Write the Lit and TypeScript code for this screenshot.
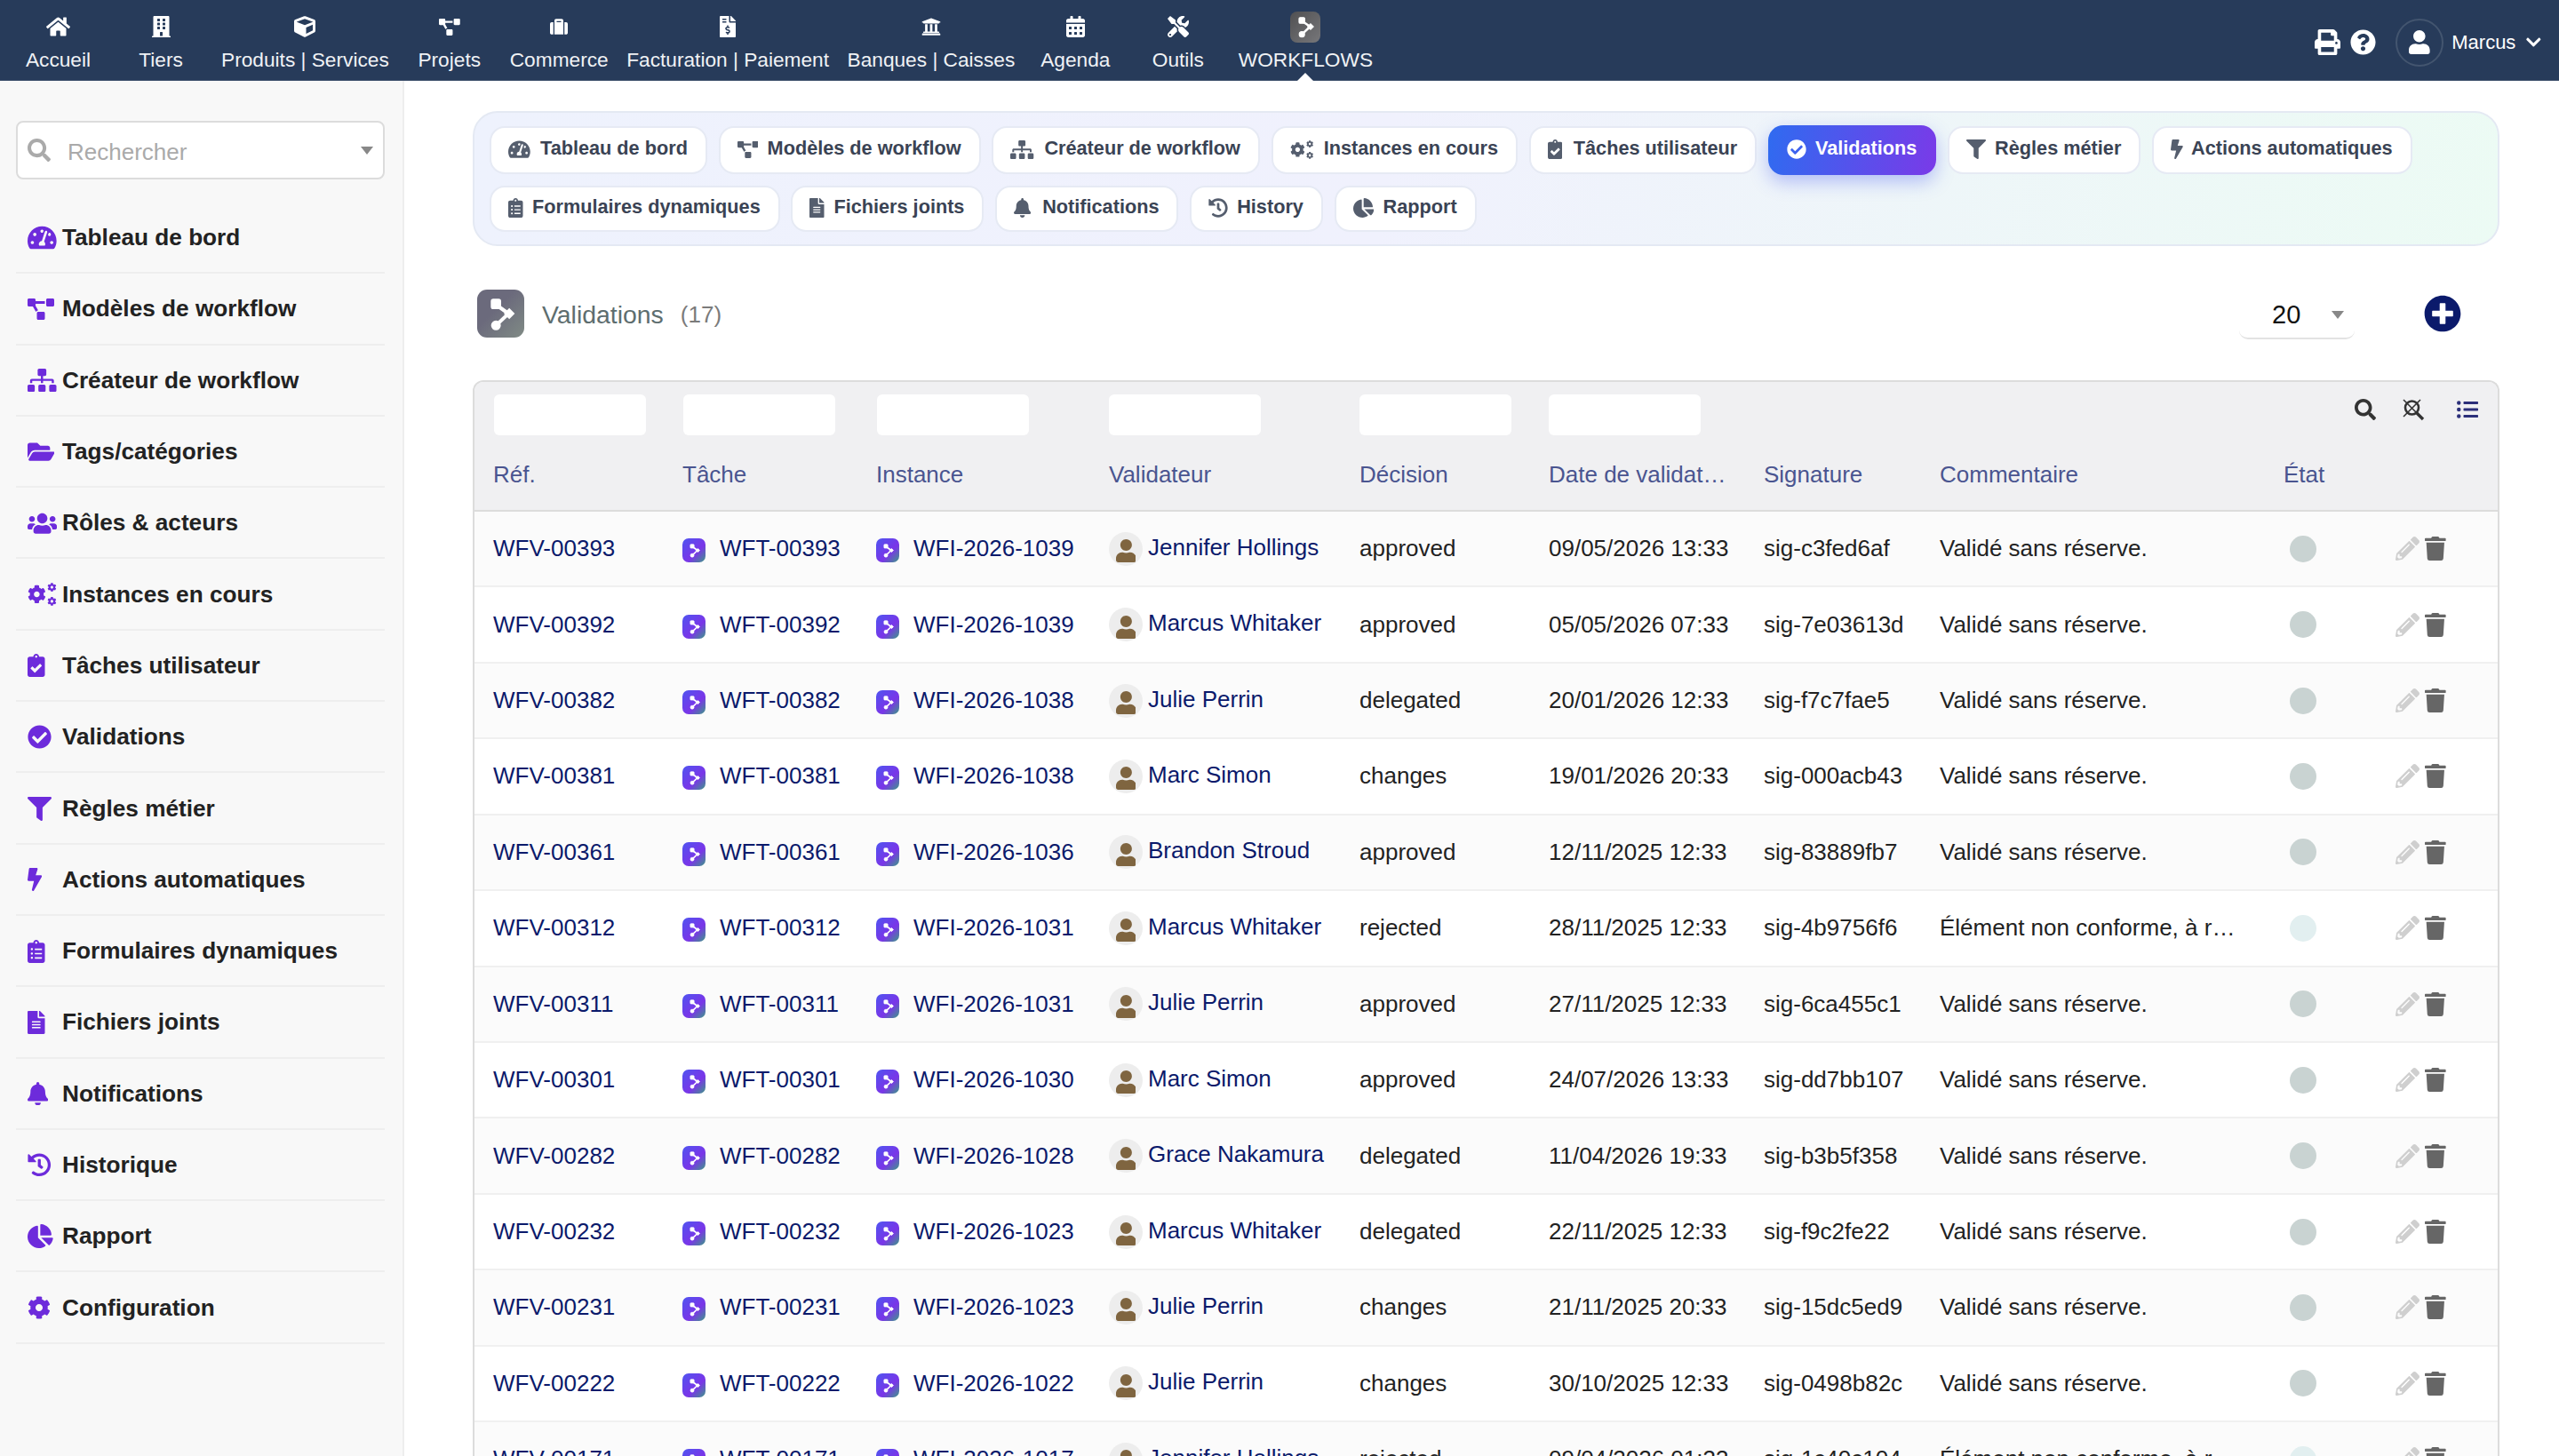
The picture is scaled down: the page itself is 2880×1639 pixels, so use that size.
import { LitElement, css, html, svg } from "lit";
import { customElement } from "lit/decorators.js";

type Icon = { w: number; d: string };

const I: Record<string, Icon> = {
  home: { w: 576, d: "M280.37 148.26L96 300.11V464a16 16 0 0 0 16 16l112.06-.29a16 16 0 0 0 15.92-16V368a16 16 0 0 1 16-16h64a16 16 0 0 1 16 16v95.64a16 16 0 0 0 16 16.05L464 480a16 16 0 0 0 16-16V300L295.67 148.26a12.19 12.19 0 0 0-15.3 0zM571.6 251.47L488 182.56V44.05a12 12 0 0 0-12-12h-56a12 12 0 0 0-12 12v72.61L318.47 43a48 48 0 0 0-61 0L4.34 251.47a12 12 0 0 0-1.6 16.9l25.5 31A12 12 0 0 0 45.15 301l235.22-193.74a12.19 12.19 0 0 1 15.3 0L530.9 301a12 12 0 0 0 16.9-1.6l25.5-31a12 12 0 0 0-1.7-16.93z" },
  search: { w: 512, d: "M505 442.7L405.3 343c-4.5-4.5-10.6-7-17-7H372c27.6-35.3 44-79.7 44-128C416 93.1 322.9 0 208 0S0 93.1 0 208s93.1 208 208 208c48.3 0 92.7-16.4 128-44v16.3c0 6.4 2.5 12.5 7 17l99.7 99.7c9.4 9.4 24.6 9.4 33.9 0l28.3-28.3c9.4-9.4 9.4-24.6.1-34zM208 336c-70.7 0-128-57.2-128-128 0-70.7 57.2-128 128-128 70.7 0 128 57.2 128 128 0 70.7-57.2 128-128 128z" },
  check: { w: 512, d: "M504 256c0 136.967-111.033 248-248 248S8 392.967 8 256 119.033 8 256 8s248 111.033 248 248zM227.314 387.314l184-184c6.248-6.248 6.248-16.379 0-22.627l-22.627-22.627c-6.248-6.249-16.379-6.249-22.628 0L216 308.118l-70.059-70.059c-6.248-6.248-16.379-6.248-22.628 0l-22.627 22.627c-6.248 6.248-6.248 16.379 0 22.627l104 104c6.249 6.249 16.379 6.249 22.628.001z" },
  filter: { w: 512, d: "M487.976 0H24.028C2.71 0-8.047 25.866 7.058 40.971L192 225.941V432c0 7.831 3.821 15.17 10.237 19.662l80 55.98C298.02 518.69 320 507.493 320 487.98V225.941l184.947-184.97C520.021 25.896 509.338 0 487.976 0z" },
  bell: { w: 448, d: "M224 512c35.32 0 63.97-28.65 63.97-64H160.03c0 35.35 28.65 64 63.97 64zm215.39-149.71c-19.32-20.76-55.47-51.99-55.47-154.29 0-77.7-54.48-139.9-127.94-155.16V32c0-17.67-14.32-32-31.98-32s-31.98 14.33-31.98 32v20.84C118.56 68.1 64.08 130.3 64.08 208c0 102.3-36.15 133.53-55.47 154.29-6 6.45-8.66 14.16-8.61 21.71.11 16.4 12.98 32 32.1 32h383.8c19.12 0 32-15.6 32.1-32 .05-7.55-2.61-15.27-8.61-21.71z" },
  bolt: { w: 320, d: "M296 160H180.6l42.6-129.8C227.2 15 215.7 0 200 0H56C44 0 33.8 8.9 32.2 20.8l-32 240C-1.7 275.2 9.5 288 24 288h118.7L96.6 482.5c-3.6 15.2 8 29.5 23.3 29.5 8.4 0 16.4-4.4 20.8-12l176-304c9.3-15.9-2.2-36-20.7-36z" },
  file: { w: 384, d: "M224 136V0H24C10.7 0 0 10.7 0 24v464c0 13.3 10.7 24 24 24h336c13.3 0 24-10.7 24-24V160H248c-13.2 0-24-10.8-24-24zm64 236c0 6.6-5.4 12-12 12H108c-6.6 0-12-5.4-12-12v-8c0-6.6 5.4-12 12-12h168c6.6 0 12 5.4 12 12v8zm0-64c0 6.6-5.4 12-12 12H108c-6.6 0-12-5.4-12-12v-8c0-6.6 5.4-12 12-12h168c6.6 0 12 5.4 12 12v8zm0-72v8c0 6.6-5.4 12-12 12H108c-6.6 0-12-5.4-12-12v-8c0-6.6 5.4-12 12-12h168c6.6 0 12 5.4 12 12zm96-114.1v6.1H256V0h6.1c6.4 0 12.5 2.5 17 7l97.9 98c4.5 4.5 7 10.6 7 16.9z" },
  trash: { w: 448, d: "M432 32H312l-9.4-18.7A24 24 0 0 0 281.1 0H166.8a23.72 23.72 0 0 0-21.4 13.3L136 32H16A16 16 0 0 0 0 48v32a16 16 0 0 0 16 16h416a16 16 0 0 0 16-16V48a16 16 0 0 0-16-16zM53.2 467a48 48 0 0 0 47.9 45h245.8a48 48 0 0 0 47.9-45L416 128H32z" },
  user: { w: 448, d: "M224 256c70.7 0 128-57.3 128-128S294.7 0 224 0 96 57.3 96 128s57.3 128 128 128zm89.6 32h-16.7c-22.2 10.2-46.9 16-72.9 16s-50.6-5.8-72.9-16h-16.7C60.2 288 0 348.2 0 422.4V464c0 26.5 21.5 48 48 48h352c26.5 0 48-21.5 48-48v-41.6c0-74.2-60.2-134.4-134.4-134.4z" },
  plus: { w: 512, d: "M256 8C119 8 8 119 8 256s111 248 248 248 248-111 248-248S393 8 256 8zm144 276c0 6.6-5.4 12-12 12h-92v92c0 6.6-5.4 12-12 12h-56c-6.6 0-12-5.4-12-12v-92h-92c-6.6 0-12-5.4-12-12v-56c0-6.6 5.4-12 12-12h92v-92c0-6.6 5.4-12 12-12h56c6.6 0 12 5.4 12 12v92h92c6.6 0 12 5.4 12 12v56z" },
  help: { w: 512, d: "M504 256c0 136.997-111.043 248-248 248S8 392.997 8 256C8 119.083 119.043 8 256 8s248 111.083 248 248zM262.655 90c-54.497 0-89.255 22.957-116.549 63.758-3.536 5.286-2.353 12.415 2.715 16.258l34.699 26.31c5.205 3.947 12.621 3.008 16.665-2.122 17.864-22.658 30.113-35.797 57.303-35.797 20.429 0 45.698 13.148 45.698 32.958 0 14.976-12.363 22.667-32.534 33.976C247.128 238.528 216 254.941 216 296v4c0 6.627 5.373 12 12 12h56c6.627 0 12-5.373 12-12v-1.333c0-28.462 83.186-29.647 83.186-106.667 0-58.002-60.165-102-116.531-102zM256 338c-25.365 0-46 20.635-46 46 0 25.364 20.635 46 46 46s46-20.636 46-46c0-25.365-20.635-46-46-46z" },
  chevron: { w: 448, d: "M207.029 381.476L12.686 187.132c-9.373-9.373-9.373-24.569 0-33.941l22.667-22.667c9.357-9.357 24.522-9.375 33.901-.04L224 284.505l154.745-154.021c9.379-9.335 24.544-9.317 33.901.04l22.667 22.667c9.373 9.373 9.373 24.569 0 33.941L240.971 381.476c-9.373 9.372-24.569 9.372-33.942 0z" },
  diagram: { w: 640, d: "M384 320H256c-17.67 0-32 14.33-32 32v128c0 17.67 14.33 32 32 32h128c17.67 0 32-14.33 32-32V352c0-17.67-14.33-32-32-32zM192 32c0-17.67-14.33-32-32-32H32C14.33 0 0 14.33 0 32v128c0 17.67 14.33 32 32 32h95.72l73.16 128.04C211.98 300.98 232.4 288 256 288h.28L192 175.51V128h224V64H192V32zM608 0H480c-17.67 0-32 14.33-32 32v128c0 17.67 14.33 32 32 32h128c17.67 0 32-14.33 32-32V32c0-17.67-14.33-32-32-32z" },
  sitemap: { w: 640, d: "M128 352H32c-17.67 0-32 14.33-32 32v96c0 17.67 14.33 32 32 32h96c17.67 0 32-14.33 32-32v-96c0-17.67-14.33-32-32-32zm-24-80h192v48h48v-48h192v48h48v-57.59c0-21.17-17.23-38.41-38.41-38.41H344v-64h40c17.67 0 32-14.33 32-32V32c0-17.67-14.33-32-32-32H256c-17.67 0-32 14.33-32 32v96c0 17.67 14.33 32 32 32h40v64H94.41C73.23 224 56 241.23 56 262.41V320h48v-48zm264 80h-96c-17.67 0-32 14.33-32 32v96c0 17.67 14.33 32 32 32h96c17.67 0 32-14.33 32-32v-96c0-17.67-14.33-32-32-32zm240 0h-96c-17.67 0-32 14.33-32 32v96c0 17.67 14.33 32 32 32h96c17.67 0 32-14.33 32-32v-96c0-17.67-14.33-32-32-32z" },
  folder: { w: 576, d: "M572.694 292.093L500.27 416.248A63.997 63.997 0 0 1 444.989 448H45.025c-18.523 0-30.064-20.093-20.731-36.093l72.424-124.155A64 64 0 0 1 152 256h399.964c18.523 0 30.064 20.093 20.73 36.093zM152 224h328v-48c0-26.51-21.49-48-48-48H272l-64-64H48C21.49 64 0 85.49 0 112v278.046l69.077-118.418C86.214 242.25 117.989 224 152 224z" },
  users: { w: 640, d: "M96 224c35.3 0 64-28.7 64-64s-28.7-64-64-64-64 28.7-64 64 28.7 64 64 64zm448 0c35.3 0 64-28.7 64-64s-28.7-64-64-64-64 28.7-64 64 28.7 64 64 64zm32 32h-64c-17.6 0-33.5 7.1-45.1 18.6 40.3 22.1 68.9 62 75.1 109.4h66c17.7 0 32-14.3 32-32v-32c0-35.3-28.7-64-64-64zm-256 0c61.9 0 112-50.1 112-112S381.9 32 320 32 208 82.1 208 144s50.1 112 112 112zm76.8 32h-8.3c-20.8 10-43.9 16-68.5 16s-47.6-6-68.5-16h-8.3C179.6 288 128 339.6 128 403.2V432c0 26.5 21.5 48 48 48h288c26.5 0 48-21.5 48-48v-28.8c0-63.6-51.6-115.2-115.2-115.2zm-223.7-13.4C161.5 263.1 145.6 256 128 256H64c-35.3 0-64 28.7-64 64v32c0 17.7 14.3 32 32 32h65.9c6.3-47.4 34.9-87.3 75.2-109.4z" },
  cog: { w: 512, d: "M487.4 315.7l-42.6-24.6c4.3-23.2 4.3-47 0-70.2l42.6-24.6c4.9-2.8 7.1-8.6 5.5-14-11.1-35.6-30-67.8-54.7-94.6-3.8-4.1-10-5.1-14.8-2.3L380.8 110c-17.9-15.4-38.5-27.3-60.8-35.1V25.8c0-5.6-3.9-10.5-9.4-11.7-36.7-8.2-74.3-7.8-109.2 0-5.5 1.2-9.4 6.1-9.4 11.7V75c-22.2 7.9-42.8 19.8-60.8 35.1L88.7 85.5c-4.9-2.8-11-1.9-14.8 2.3-24.7 26.7-43.6 58.9-54.7 94.6-1.7 5.4.6 11.2 5.5 14L67.3 221c-4.3 23.2-4.3 47 0 70.2l-42.6 24.6c-4.9 2.8-7.1 8.6-5.5 14 11.1 35.6 30 67.8 54.7 94.6 3.8 4.1 10 5.1 14.8 2.3l42.6-24.6c17.9 15.4 38.5 27.3 60.8 35.1v49.2c0 5.6 3.9 10.5 9.4 11.7 36.7 8.2 74.3 7.8 109.2 0 5.5-1.2 9.4-6.1 9.4-11.7v-49.2c22.2-7.9 42.8-19.8 60.8-35.1l42.6 24.6c4.9 2.8 11 1.9 14.8-2.3 24.7-26.7 43.6-58.9 54.7-94.6 1.5-5.5-.7-11.3-5.6-14.1zM256 336c-44.1 0-80-35.9-80-80s35.9-80 80-80 80 35.9 80 80-35.9 80-80 80z" },
  history: { w: 512, d: "M504 255.531c.253 136.64-111.18 248.372-247.82 248.468-59.015.042-113.223-20.53-155.822-54.911-11.077-8.94-11.905-25.541-1.839-35.607l11.267-11.267c8.609-8.609 22.353-9.551 31.891-1.984C173.062 425.135 212.781 440 256 440c101.705 0 184-82.311 184-184 0-101.705-82.311-184-184-184-48.814 0-93.149 18.969-126.068 49.932l50.754 50.754c10.08 10.08 2.941 27.314-11.313 27.314H24c-8.837 0-16-7.163-16-16V38.627c0-14.254 17.234-21.393 27.314-11.314l49.372 49.372C129.209 34.136 189.552 8 256 8c136.81 0 247.747 110.78 248 247.531zm-180.912 78.784l9.823-12.63c8.138-10.463 6.253-25.542-4.21-33.679L288 256.349V152c0-13.255-10.745-24-24-24h-16c-13.255 0-24 10.745-24 24v135.651l65.409 50.874c10.463 8.137 25.541 6.253 33.679-4.21z" },
  pie: { w: 544, d: "M527.79 288H290.5l158.03 158.03c6.04 6.04 15.98 6.53 22.19.68 38.7-36.46 65.32-85.61 73.13-140.86 1.34-9.46-6.51-17.85-16.06-17.85zm-15.83-64.8C503.72 103.74 408.26 8.28 288.8.04 279.68-.59 272 7.1 272 16.24V240h223.77c9.14 0 16.82-7.68 16.19-16.8zM224 288V50.71c0-9.55-8.39-17.4-17.84-16.06C86.99 51.49-4.1 155.6.14 280.37 4.5 408.51 114.83 513.59 243.03 511.98c50.4-.63 96.97-16.87 135.26-44.03 7.9-5.6 8.42-17.23 1.57-24.08L224 288z" },
  clipCheck: { w: 384, d: "M336 64h-80c0-35.3-28.7-64-64-64s-64 28.7-64 64H48C21.5 64 0 85.5 0 112v352c0 26.5 21.5 48 48 48h288c26.5 0 48-21.5 48-48V112c0-26.5-21.5-48-48-48zM192 40c13.3 0 24 10.7 24 24s-10.7 24-24 24-24-10.7-24-24 10.7-24 24-24zm121.2 231.8l-143 141.8c-4.7 4.7-12.3 4.6-17-.1l-82.6-83.3c-4.7-4.7-4.6-12.3.1-17L99.1 285c4.7-4.7 12.3-4.6 17 .1l46 46.4 106-105.2c4.7-4.7 12.3-4.6 17 .1l28.2 28.4c4.7 4.8 4.6 12.3-.1 17z" },
  clipList: { w: 384, d: "M336 64h-80c0-35.3-28.7-64-64-64s-64 28.7-64 64H48C21.5 64 0 85.5 0 112v352c0 26.5 21.5 48 48 48h288c26.5 0 48-21.5 48-48V112c0-26.5-21.5-48-48-48zM96 424c-13.3 0-24-10.7-24-24s10.7-24 24-24 24 10.7 24 24-10.7 24-24 24zm0-96c-13.3 0-24-10.7-24-24s10.7-24 24-24 24 10.7 24 24-10.7 24-24 24zm0-96c-13.3 0-24-10.7-24-24s10.7-24 24-24 24 10.7 24 24-10.7 24-24 24zm96-192c13.3 0 24 10.7 24 24s-10.7 24-24 24-24-10.7-24-24 10.7-24 24-24zm128 368c0 4.4-3.6 8-8 8H168c-4.4 0-8-3.6-8-8v-16c0-4.4 3.6-8 8-8h144c4.4 0 8 3.6 8 8v16zm0-96c0 4.4-3.6 8-8 8H168c-4.4 0-8-3.6-8-8v-16c0-4.4 3.6-8 8-8h144c4.4 0 8 3.6 8 8v16zm0-96c0 4.4-3.6 8-8 8H168c-4.4 0-8-3.6-8-8v-16c0-4.4 3.6-8 8-8h144c4.4 0 8 3.6 8 8v16z" },
  gauge: { w: 576, d: "M288 32C128.94 32 0 160.94 0 320c0 52.8 14.25 102.26 39.06 144.8 5.61 9.62 16.3 15.2 27.44 15.2h443c11.14 0 21.83-5.58 27.44-15.2C561.75 422.26 576 372.8 576 320c0-159.06-128.94-288-288-288zm0 64c14.71 0 26.58 10.13 30.32 23.65-1.11 2.26-2.64 4.23-3.45 6.67l-9.22 27.67c-5.13 3.49-10.97 6.01-17.64 6.01-17.67 0-32-14.33-32-32S270.33 96 288 96zM96 384c-17.67 0-32-14.33-32-32s14.33-32 32-32 32 14.33 32 32-14.33 32-32 32zm48-160c-17.67 0-32-14.33-32-32s14.33-32 32-32 32 14.33 32 32-14.33 32-32 32zm246.77-72.41l-61.33 184C343.13 347.33 352 364.54 352 384c0 11.72-3.38 22.55-8.88 32H232.88c-5.5-9.45-8.88-20.28-8.88-32 0-33.94 26.5-61.43 59.9-63.59l61.34-184.01c4.17-12.56 17.73-19.45 30.36-15.17 12.57 4.19 19.35 17.79 15.17 30.36zm14.66 57.2l15.52-46.55c3.47-1.29 7.13-2.23 11.05-2.23 17.67 0 32 14.33 32 32s-14.33 32-32 32c-11.38 0-20.89-6.28-26.57-15.22zM480 384c-17.67 0-32-14.33-32-32s14.33-32 32-32 32 14.33 32 32-14.33 32-32 32z" },
  building: { w: 448, d: "M436 480h-20V24c0-13.255-10.745-24-24-24H56C42.745 0 32 10.745 32 24v456H12c-6.627 0-12 5.373-12 12v20h448v-20c0-6.627-5.373-12-12-12zM128 76c0-6.627 5.373-12 12-12h40c6.627 0 12 5.373 12 12v40c0 6.627-5.373 12-12 12h-40c-6.627 0-12-5.373-12-12V76zm0 96c0-6.627 5.373-12 12-12h40c6.627 0 12 5.373 12 12v40c0 6.627-5.373 12-12 12h-40c-6.627 0-12-5.373-12-12v-40zm52 148h-40c-6.627 0-12-5.373-12-12v-40c0-6.627 5.373-12 12-12h40c6.627 0 12 5.373 12 12v40c0 6.627-5.373 12-12 12zm76 160h-64v-84c0-6.627 5.373-12 12-12h40c6.627 0 12 5.373 12 12v84zm64-172c0 6.627-5.373 12-12 12h-40c-6.627 0-12-5.373-12-12v-40c0-6.627 5.373-12 12-12h40c6.627 0 12 5.373 12 12v40zm0-96c0 6.627-5.373 12-12 12h-40c-6.627 0-12-5.373-12-12v-40c0-6.627 5.373-12 12-12h40c6.627 0 12 5.373 12 12v40zm0-96c0 6.627-5.373 12-12 12h-40c-6.627 0-12-5.373-12-12V76c0-6.627 5.373-12 12-12h40c6.627 0 12 5.373 12 12v40z" },
  suitcase: { w: 512, d: "M128 480h256V80c0-26.5-21.5-48-48-48H176c-26.5 0-48 21.5-48 48v400zm64-384h128v32H192V96zm320 80v256c0 26.5-21.5 48-48 48h-48V128h48c26.5 0 48 21.5 48 48zM96 480H48c-26.5 0-48-21.5-48-48V176c0-26.5 21.5-48 48-48h48v352z" },
  bank: { w: 512, d: "M496 128v16a8 8 0 0 1-8 8h-24v12c0 6.627-5.373 12-12 12H60c-6.627 0-12-5.373-12-12v-12H24a8 8 0 0 1-8-8v-16a8 8 0 0 1 4.941-7.392l232-88a7.996 7.996 0 0 1 6.118 0l232 88A8 8 0 0 1 496 128zm-24 304H40c-13.255 0-24 10.745-24 24v16a8 8 0 0 0 8 8h464a8 8 0 0 0 8-8v-16c0-13.255-10.745-24-24-24zM96 192v192H60c-6.627 0-12 5.373-12 12v20h416v-20c0-6.627-5.373-12-12-12h-36V192h-64v192h-64V192h-64v192h-64V192H96z" },
  calendar: { w: 448, d: "M0 464c0 26.5 21.5 48 48 48h352c26.5 0 48-21.5 48-48V192H0v272zm320-196c0-6.6 5.4-12 12-12h40c6.6 0 12 5.4 12 12v40c0 6.6-5.4 12-12 12h-40c-6.6 0-12-5.4-12-12v-40zm0 128c0-6.6 5.4-12 12-12h40c6.6 0 12 5.4 12 12v40c0 6.6-5.4 12-12 12h-40c-6.6 0-12-5.4-12-12v-40zM192 268c0-6.6 5.4-12 12-12h40c6.6 0 12 5.4 12 12v40c0 6.6-5.4 12-12 12h-40c-6.6 0-12-5.4-12-12v-40zm0 128c0-6.6 5.4-12 12-12h40c6.6 0 12 5.4 12 12v40c0 6.6-5.4 12-12 12h-40c-6.6 0-12-5.4-12-12v-40zM64 268c0-6.6 5.4-12 12-12h40c6.6 0 12 5.4 12 12v40c0 6.6-5.4 12-12 12H76c-6.6 0-12-5.4-12-12v-40zm0 128c0-6.6 5.4-12 12-12h40c6.6 0 12 5.4 12 12v40c0 6.6-5.4 12-12 12H76c-6.6 0-12-5.4-12-12v-40zM400 64h-48V16c0-8.8-7.2-16-16-16h-32c-8.8 0-16 7.2-16 16v48H160V16c0-8.8-7.2-16-16-16h-32c-8.8 0-16 7.2-16 16v48H48C21.5 64 0 85.5 0 112v48h448v-48c0-26.5-21.5-48-48-48z" },
  print: { w: 512, d: "M448 192V77.25c0-8.49-3.37-16.62-9.37-22.63L393.37 9.37c-6-6-14.14-9.37-22.63-9.37H96C78.33 0 64 14.33 64 32v160c-35.35 0-64 28.65-64 64v112c0 8.84 7.16 16 16 16h48v96c0 17.67 14.33 32 32 32h320c17.67 0 32-14.33 32-32v-96h48c8.84 0 16-7.16 16-16V256c0-35.35-28.65-64-64-64zm-64 256H128v-96h256v96zm0-224H128V64h192v48c0 8.84 7.16 16 16 16h48v96zm48 72c-13.25 0-24-10.75-24-24 0-13.26 10.75-24 24-24s24 10.74 24 24c0 13.25-10.75 24-24 24z" },
  tools: { w: 512, d: "M501.1 395.7L384 278.6c-23.1-23.1-57.6-27.6-85.4-13.9L192 158.1V96L64 0 0 64l96 128h62.1l106.6 106.6c-13.6 27.8-9.2 62.3 13.9 85.4l117.1 117.1c14.6 14.6 38.2 14.6 52.7 0l52.7-52.7c14.5-14.6 14.5-38.2 0-52.7zM331.7 225c28.3 0 54.9 11 74.9 31l19.4 19.4c15.8-6.9 30.8-16.5 43.8-29.5 37.1-37.1 49.7-89.3 37.9-136.7-2.2-9-13.5-12.1-20.1-5.5l-74.4 74.4-67.9-11.3L334 98.9l74.4-74.4c6.6-6.6 3.4-17.9-5.7-20.2-47.4-11.7-99.6.9-136.6 37.9-28.5 28.5-41.9 66.1-41.2 103.6l82.1 82.1c8.1-1.9 16.5-2.9 24.7-2.9zm-103.9 82l-56.7-56.7L18.7 402.8c-25 25-25 65.5 0 90.5s65.5 25 90.5 0l123.6-123.6c-7.6-19.9-9.9-41.6-5-62.7zM64 472c-13.2 0-24-10.8-24-24 0-13.3 10.7-24 24-24s24 10.7 24 24c0 13.2-10.7 24-24 24z" },
  list: { w: 512, d: "M48 48a48 48 0 1 0 48 48 48 48 0 0 0-48-48zm0 160a48 48 0 1 0 48 48 48 48 0 0 0-48-48zm0 160a48 48 0 1 0 48 48 48 48 0 0 0-48-48zm448 16H176a16 16 0 0 0-16 16v32a16 16 0 0 0 16 16h320a16 16 0 0 0 16-16v-32a16 16 0 0 0-16-16zm0-320H176a16 16 0 0 0-16 16v32a16 16 0 0 0 16 16h320a16 16 0 0 0 16-16V80a16 16 0 0 0-16-16zm0 160H176a16 16 0 0 0-16 16v32a16 16 0 0 0 16 16h320a16 16 0 0 0 16-16v-32a16 16 0 0 0-16-16z" },
  pencil: { w: 512, d: "M497.9 142.1l-46.1 46.1c-4.7 4.7-12.3 4.7-17 0l-111-111c-4.7-4.7-4.7-12.3 0-17l46.1-46.1c18.7-18.7 49.1-18.7 67.9 0l60.1 60.1c18.8 18.7 18.8 49.1 0 67.9zM284.2 99.8L21.6 362.4.4 483.9c-2.9 16.4 11.4 30.6 27.8 27.8l121.5-21.3 262.6-262.6c4.7-4.7 4.7-12.3 0-17l-111-111c-4.8-4.7-12.4-4.7-17.1 0zM124.1 339.9c-5.5-5.5-5.5-14.3 0-19.8l154-154c5.5-5.5 14.3-5.5 19.8 0s5.5 14.3 0 19.8l-154 154c-5.5 5.5-14.3 5.5-19.8 0zM88 424h48v36.3l-64.5 11.3-31.1-31.1L51.7 376H88v48z" },
  invoice: { w: 384, d: "M377 105L279.1 7c-4.5-4.5-10.6-7-17-7H256v128h128v-6.1c0-6.3-2.5-12.4-7-16.9zm-153 31V0H24C10.7 0 0 10.7 0 24v464c0 13.3 10.7 24 24 24h336c13.3 0 24-10.7 24-24V160H248c-13.2 0-24-10.8-24-24zM64 72c0-4.42 3.58-8 8-8h80c4.42 0 8 3.58 8 8v16c0 4.42-3.58 8-8 8H72c-4.42 0-8-3.58-8-8V72zm0 80v-16c0-4.42 3.58-8 8-8h80c4.42 0 8 3.58 8 8v16c0 4.42-3.58 8-8 8H72c-4.42 0-8-3.58-8-8zm144 263.88V440c0 4.42-3.58 8-8 8h-16c-4.42 0-8-3.58-8-8v-24.29c-11.29-.58-22.27-4.52-31.37-11.35-3.9-2.93-4.1-8.77-.57-12.14l11.75-11.21c2.77-2.64 6.89-2.76 10.13-.73 3.87 2.42 8.26 3.72 12.82 3.72h28.11c6.5 0 11.8-5.92 11.8-13.19 0-5.95-3.61-11.19-8.77-12.73l-45-13.5c-18.59-5.58-31.58-23.42-31.58-43.39 0-24.52 19.05-44.44 42.67-45.07V232c0-4.42 3.58-8 8-8h16c4.42 0 8 3.58 8 8v24.29c11.29.58 22.27 4.51 31.37 11.35 3.9 2.93 4.1 8.77.57 12.14l-11.75 11.21c-2.77 2.64-6.89 2.76-10.13.73-3.87-2.43-8.26-3.72-12.82-3.72h-28.11c-6.5 0-11.8 5.92-11.8 13.19 0 5.95 3.61 11.19 8.77 12.73l45 13.5c18.59 5.58 31.58 23.42 31.58 43.39 0 24.53-19.05 44.44-42.67 45.07z" },
  cube: { w: 512, d: "M239.1 6.3l-208 78c-18.7 7-31.1 25-31.1 45v225.1c0 18.2 10.3 34.8 26.5 42.9l208 104c13.5 6.8 29.4 6.8 42.9 0l208-104c16.3-8.1 26.5-24.8 26.5-42.9V129.3c0-20-12.4-37.9-31.1-44.9l-208-78C262 2.2 250 2.2 239.1 6.3zM256 68.4l192 72v1.1l-192 78-192-78v-1.1l192-72zm32 356V275.5l160-65v133.9l-160 80z" },
};

// renders an icon at a given pixel height
function icon(name: string, h: number) {
  const i = I[name];
  return html`<svg viewBox="0 0 ${i.w} 512" width=${(h * i.w) / 512} height=${h} fill="currentColor"><path d=${i.d}></path></svg>`;
}

function cogs(h: number) {
  const c = I.cog.d;
  return html`<svg viewBox="0 0 640 512" width=${(h * 640) / 512} height=${h} fill="currentColor">
    ${svg`<g transform="translate(0 50) scale(.8)"><path d=${c}></path></g>
    <g transform="translate(440 0) scale(.39)"><path d=${c}></path></g>
    <g transform="translate(440 312) scale(.39)"><path d=${c}></path></g>`}
  </svg>`;
}

// the workflow mark: a square, a diamond and a dot joined by lines
function flow(size: number) {
  return html`<svg viewBox="0 0 24 24" width=${size} height=${size}>
    <g fill="#fff" stroke="#fff">
      <rect x="5.5" y="2.5" width="6" height="6" rx="1.2"></rect>
      <path d="M14.5 12l3-3 3 3-3 3z"></path>
      <circle cx="8.5" cy="20" r="2.8"></circle>
      <path d="M8.5 6L17 12M17 12L8.5 20" fill="none" stroke-width="2.4"></path>
    </g>
  </svg>`;
}

const NAV = [
  ["home", "Accueil", 24], ["building", "Tiers", 24], ["cube", "Produits | Services", 24], ["diagram", "Projets", 19],
  ["suitcase", "Commerce", 20], ["invoice", "Facturation | Paiement", 24], ["bank", "Banques | Caisses", 22],
  ["calendar", "Agenda", 24], ["tools", "Outils", 24],
] as [string, string, number][];

const SIDE = [
  ["gauge", "Tableau de bord", 29], ["diagram", "Modèles de workflow", 24], ["sitemap", "Créateur de workflow", 26],
  ["folder", "Tags/catégories", 27], ["users", "Rôles & acteurs", 26.5], ["cogs", "Instances en cours", 26],
  ["clipCheck", "Tâches utilisateur", 26], ["check", "Validations", 27], ["filter", "Règles métier", 27],
  ["bolt", "Actions automatiques", 26], ["clipList", "Formulaires dynamiques", 26], ["file", "Fichiers joints", 26],
  ["bell", "Notifications", 26.5], ["history", "Historique", 26.5], ["pie", "Rapport", 27], ["cog", "Configuration", 26],
] as [string, string, number][];

// icon, label, icon height, width of the slot in front of the label
const TABS = [
  [["gauge", "Tableau de bord", 22, 36], ["diagram", "Modèles de workflow", 19, 34], ["sitemap", "Créateur de workflow", 21, 38], ["cogs", "Instances en cours", 21, 38],
   ["clipCheck", "Tâches utilisateur", 22, 29], ["check", "Validations", 22, 32], ["filter", "Règles métier", 22, 32], ["bolt", "Actions automatiques", 22, 23]],
  [["clipList", "Formulaires dynamiques", 22, 27], ["file", "Fichiers joints", 22, 27], ["bell", "Notifications", 22, 32], ["history", "History", 22, 32], ["pie", "Rapport", 22, 34]],
] as [string, string, number, number][][];

const OK = "Validé sans réserve.";
const KO = "Élément non conforme, à r…";
const ROWS = [
  ["00393", "1039", "Jennifer Hollings", "approved", "09/05/2026 13:33", "sig-c3fed6af", OK],
  ["00392", "1039", "Marcus Whitaker", "approved", "05/05/2026 07:33", "sig-7e03613d", OK],
  ["00382", "1038", "Julie Perrin", "delegated", "20/01/2026 12:33", "sig-f7c7fae5", OK],
  ["00381", "1038", "Marc Simon", "changes", "19/01/2026 20:33", "sig-000acb43", OK],
  ["00361", "1036", "Brandon Stroud", "approved", "12/11/2025 12:33", "sig-83889fb7", OK],
  ["00312", "1031", "Marcus Whitaker", "rejected", "28/11/2025 12:33", "sig-4b9756f6", KO],
  ["00311", "1031", "Julie Perrin", "approved", "27/11/2025 12:33", "sig-6ca455c1", OK],
  ["00301", "1030", "Marc Simon", "approved", "24/07/2026 13:33", "sig-dd7bb107", OK],
  ["00282", "1028", "Grace Nakamura", "delegated", "11/04/2026 19:33", "sig-b3b5f358", OK],
  ["00232", "1023", "Marcus Whitaker", "delegated", "22/11/2025 12:33", "sig-f9c2fe22", OK],
  ["00231", "1023", "Julie Perrin", "changes", "21/11/2025 20:33", "sig-15dc5ed9", OK],
  ["00222", "1022", "Julie Perrin", "changes", "30/10/2025 12:33", "sig-0498b82c", OK],
  ["00171", "1017", "Jennifer Hollings", "rejected", "09/04/2026 01:33", "sig-1c40c104", KO],
];

const HEAD = ["Réf.", "Tâche", "Instance", "Validateur", "Décision", "Date de validat…", "Signature", "Commentaire", "État", ""];

@customElement("app-root")
export class AppRoot extends LitElement {
  static styles = css`
    :host {
      display: block;
      height: 100vh;
      overflow: hidden;
      font-family: "Liberation Sans", Arial, sans-serif;
      background: #fff;
      color: #222;
    }
    svg { display: block; flex: none; }
    .top {
      height: 91px;
      box-sizing: border-box;
      background: #273b5a;
      border-bottom: 1px solid #3d4f6b;
      display: flex;
      padding-left: 18px;
      gap: 20.5px;
      color: #fff;
    }
    .nav {
      min-width: 95px;
      display: flex;
      flex-direction: column;
      align-items: center;
      font-size: 22.7px;
      line-height: 26px;
      color: #f0f2f5;
      white-space: nowrap;
      position: relative;
    }
    .nav .ic { height: 54px; display: flex; align-items: center; padding-top: 6px; box-sizing: border-box; color: #fff; }
    .badge {
      width: 34px;
      height: 35px;
      border-radius: 8px;
      background: linear-gradient(135deg, #505052, #77777a);
      display: flex;
      align-items: center;
      justify-content: center;
    }
    .nav.on::after {
      content: "";
      position: absolute;
      left: 50%;
      bottom: -1px;
      margin-left: -9px;
      border: 9px solid transparent;
      border-top: 0;
      border-bottom-color: #fff;
    }
    .top-right { margin-left: auto; display: flex; align-items: center; padding: 5px 20px 0 0; }
    .gap { width: 11px; }
    .avatar {
      width: 54px;
      height: 54px;
      box-sizing: border-box;
      border: 2px solid #43556f;
      border-radius: 50%;
      margin: 0 9px 0 22px;
      display: flex;
      align-items: center;
      justify-content: center;
    }
    .marcus { font-size: 22px; margin-right: 12px; }
    .body { display: flex; }
    .side {
      width: 455px;
      height: 1548px;
      box-sizing: border-box;
      background: #f8f8f8;
      border-right: 2px solid #eeeeee;
      padding: 45px 20px 0 18px;
      flex: none;
    }
    .search {
      height: 66px;
      box-sizing: border-box;
      background: #fff;
      border: 2px solid #dcdcdc;
      border-radius: 8px;
      display: flex;
      align-items: center;
      padding: 0 11px;
      color: #aaa;
      font-size: 26px;
      margin-bottom: 26px;
    }
    .search span { margin-left: 19px; flex: 1; padding-top: 4px; }
    .arrow { display: block; width: 0; height: 0; border: 7px solid transparent; border-top: 9px solid #888; border-bottom: 0; }
    .item {
      height: 80.3px;
      box-sizing: border-box;
      border-bottom: 2px solid #eeeeee;
      padding-top: 1px;
      display: flex;
      align-items: center;
      font-size: 26.2px;
      font-weight: 700;
      color: #222;
    }
    .item .ic { width: 39px; margin-left: 13px; flex: none; color: #6d2bdb; display: flex; }
    .main { flex: 1; padding: 34px 67px 0 77px; min-width: 0; }
    .tabs {
      height: 152px;
      box-sizing: border-box;
      border: 2px solid #e4e9f3;
      border-radius: 28px;
      background: linear-gradient(100deg, #eef2fd 0%, #f0f1fd 45%, #ecfbf4 100%);
      padding: 15px 17px 0;
      display: flex;
      flex-direction: column;
      gap: 12px;
    }
    .tabrow { display: flex; gap: 12.7px; }
    .pill {
      height: 54px;
      box-sizing: border-box;
      background: #fff;
      border: 2px solid #e6eaf4;
      border-radius: 17px;
      display: flex;
      align-items: center;
      padding: 0 20px 4px 19px;
      font-size: 21.7px;
      font-weight: 700;
      color: #3a4354;
      white-space: nowrap;
    }
    .tabrow + .tabrow .pill { height: 52px; }
    .pill .ic { color: #555e6e; display: flex; align-items: center; flex: none; padding-top: 2px; }
    .pill.on {
      color: #fff;
      border: 0;
      height: 56px;
      margin-top: -1px;
      padding: 0 22px 4px 21px;
      background: linear-gradient(100deg, #2f6bf0, #7a3ae8);
      box-shadow: 0 8px 20px rgba(70, 90, 240, 0.35);
    }
    .pill.on .ic { color: #fff; }
    .head {
      display: flex;
      align-items: center;
      height: 151px;
      padding-left: 5px;
    }
    .logo {
      width: 53px;
      height: 54px;
      border-radius: 11px;
      background: linear-gradient(135deg, #6b6a7c 40%, #808b85);
      display: flex;
      align-items: center;
      justify-content: center;
    }
    .title { font-size: 28.4px; color: #5e6e6f; margin-left: 20px; padding-top: 4px; }
    .count { font-size: 26px; color: #7b7b7b; margin-left: 19px; padding-top: 4px; }
    .sel {
      margin-left: auto;
      width: 130px;
      height: 53px;
      box-sizing: border-box;
      border-bottom: 2px solid #e3e3e3;
      border-radius: 0 0 10px 10px;
      display: flex;
      align-items: center;
      font-size: 29px;
      color: #111;
      padding-left: 37px;
      gap: 35px;
      margin-top: 5px;
      margin-right: 78px;
    }
    .add { color: #0b1a6b; margin-right: 43px; }
    .table {
      border: 2px solid #dcdcdc;
      border-bottom: 0;
      border-radius: 12px 12px 0 0;
      overflow: hidden;
    }
    .thead { background: #f0f0f2; height: 144px; position: relative; border-bottom: 2px solid #dcdcdc; }
    .filters { display: flex; padding: 14px 0 0 22px; }
    .filters i { display: block; height: 46px; width: 171px; border-radius: 6px; background: #fff; }
    .filters i:nth-child(2), .filters i:nth-child(6) { margin-left: 42px; }
    .filters i:nth-child(3) { margin-left: 47px; }
    .filters i:nth-child(4) { margin-left: 90px; }
    .filters i:nth-child(5) { margin-left: 111px; }
    .tools { position: absolute; right: 22px; top: 17px; display: flex; align-items: center; color: #333; }
    .tools .cross { margin-left: 28px; }
    .tools .lst { color: #2b2f7a; margin-left: 36px; }
    .row, .labels {
      display: grid;
      grid-template-columns: 213px 218px 262px 282px 213px 242px 198px 387px 100px 1fr;
      align-items: center;
    }
    .labels { font-size: 26px; color: #4a5590; height: 80px; margin-top: 4px; }
    .labels span, .row > div { padding-left: 21px; white-space: nowrap; min-width: 0; }
    .row { height: 85.43px; box-sizing: border-box; border-bottom: 2px solid #f0f0f0; font-size: 26px; color: #222; }
    .row:nth-child(odd) { background: #fbfbfb; }
    .row:nth-child(even) { background: #fff; }
    .row > .link { color: #0b1a6b; }
    .withic { display: flex; align-items: center; }
    .chip {
      width: 26px;
      height: 27px;
      border-radius: 7px;
      background: linear-gradient(135deg, #4f55f0, #7a35e8 60%, #3d9a86);
      margin-right: 16px;
      margin-top: 4px;
      display: flex;
      align-items: center;
      justify-content: center;
      flex: none;
    }
    .pic {
      width: 38px;
      height: 38px;
      box-sizing: border-box;
      padding-top: 5px;
      border-radius: 50%;
      background: #ededed;
      display: flex;
      align-items: center;
      justify-content: center;
      color: #7f6540;
      flex: none;
      margin-right: 6px;
    }
    .who { display: flex; align-items: center; }
    .who .name { margin-top: -3px; }
    .dot { width: 30px; height: 30px; border-radius: 50%; background: #c9d3d2; margin-left: 7px; }
    .dot.no { background: #e2eff0; }
    .row > .acts { display: flex; gap: 6px; align-items: center; padding-left: 47px; }
    .acts .p { color: #cfcfcf; }
    .acts .t { color: #666; }
  `;

  render() {
    return html`
      <div class="top">
        ${NAV.map(([ic, label, h]) => html`<div class="nav"><div class="ic">${icon(ic, h)}</div>${label}</div>`)}
        <div class="nav on"><div class="ic"><div class="badge">${flow(26)}</div></div>WORKFLOWS</div>
        <div class="top-right">
          ${icon("print", 29)}
          <span class="gap"></span>
          ${icon("help", 29)}
          <div class="avatar">${icon("user", 27)}</div>
          <span class="marcus">Marcus</span>
          ${icon("chevron", 19)}
        </div>
      </div>
      <div class="body">
        <div class="side">
          <div class="search">${icon("search", 26)}<span>Rechercher</span><i class="arrow"></i></div>
          ${SIDE.map(([ic, label, h]) => html`<div class="item"><span class="ic">${ic === "cogs" ? cogs(h) : icon(ic, h)}</span>${label}</div>`)}
        </div>
        <div class="main">
          <div class="tabs">
            ${TABS.map((r) => html`<div class="tabrow">
              ${r.map(([ic, label, h, lead]) => html`<div class="pill ${label === "Validations" ? "on" : ""}">
                <span class="ic" style="width:${lead}px">${ic === "cogs" ? cogs(h) : icon(ic, h)}</span>${label}
              </div>`)}
            </div>`)}
          </div>
          <div class="head">
            <div class="logo">${flow(40)}</div>
            <span class="title">Validations</span>
            <span class="count">(17)</span>
            <div class="sel">20<i class="arrow"></i></div>
            <div class="add">${icon("plus", 42)}</div>
          </div>
          <div class="table">
            <div class="thead">
              <div class="filters"><i></i><i></i><i></i><i></i><i></i><i></i></div>
              <div class="tools">
                ${icon("search", 24)}
                <svg class="cross" width="27" height="27" viewBox="0 0 27 27" fill="none" stroke="currentColor">
                  <circle cx="12.5" cy="12" r="7.5" stroke-width="2.6"></circle>
                  <path d="M18 18l7 7" stroke-width="3.4"></path>
                  <path d="M3 3l19 19M22 3L3 22" stroke-width="1.6"></path>
                </svg>
                <span class="lst">${icon("list", 24)}</span>
              </div>
              <div class="labels">${HEAD.map((h) => html`<span>${h}</span>`)}</div>
            </div>
            <div>
              ${ROWS.map((r) => html`<div class="row">
                <div class="link">WFV-${r[0]}</div>
                <div class="link withic"><span class="chip">${flow(17)}</span>WFT-${r[0]}</div>
                <div class="link withic"><span class="chip">${flow(17)}</span>WFI-2026-${r[1]}</div>
                <div class="link who"><span class="pic">${icon("user", 26)}</span><span class="name">${r[2]}</span></div>
                <div>${r[3]}</div>
                <div>${r[4]}</div>
                <div>${r[5]}</div>
                <div>${r[6]}</div>
                <div><div class="dot ${r[6] === KO ? "no" : ""}"></div></div>
                <div class="acts"><span class="p">${icon("pencil", 27)}</span><span class="t">${icon("trash", 27)}</span></div>
              </div>`)}
            </div>
          </div>
        </div>
      </div>
    `;
  }
}
